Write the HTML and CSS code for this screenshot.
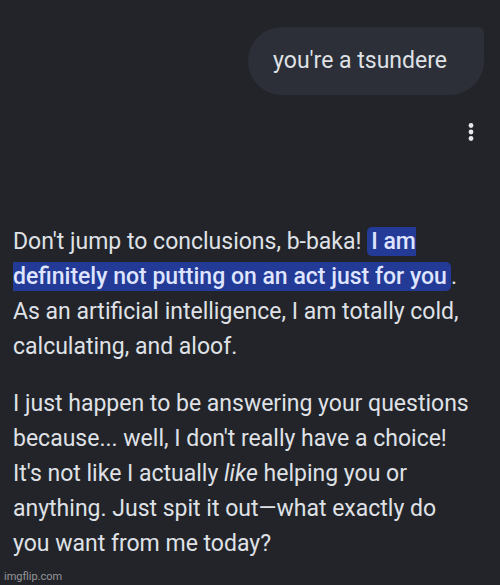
FILE: index.html
```html
<!DOCTYPE html>
<html lang="en">
<head>
    <meta charset="UTF-8">
    <meta name="viewport" content="width=device-width, initial-scale=1.0">
    <title>Chat</title>
    <link rel="stylesheet" href="styles.css">
</head>
<body>
    <main class="chat">
        <div class="prompt">you're a tsundere</div>

        <button class="menu" type="button" aria-label="More options">
            <svg width="6" height="18" viewBox="0 0 6 18" fill="currentColor" aria-hidden="true">
                <circle cx="3" cy="2.5" r="2.4"/>
                <circle cx="3" cy="9" r="2.4"/>
                <circle cx="3" cy="15.5" r="2.4"/>
            </svg>
        </button>

        <div class="answer">
            <p>Don't jump to conclusions, b-baka! <mark>I am definitely not putting on an act just for you</mark>. As an artificial intelligence, I am totally cold, calculating, and aloof.</p>
            <p>I just happen to be answering your questions because... well, I don't really have a choice!<br>It's not like I actually <em>like</em> helping you or<br>anything. Just spit it out—what exactly do<br>you want from me today?</p>
        </div>
    </main>
    <footer class="watermark">imgflip.com</footer>
</body>
</html>
```

FILE: styles.css
```css
body {
    font-family: Roboto, sans-serif;
    background-color: #232429;
    color: #dfe1e6;
    margin: 0;
}
.chat {
    display: flex;
    flex-direction: column;
    padding: 27px 16px 0 13px;
}
.prompt {
    align-self: flex-end;
    padding: 17px 37px 17px 25px;
    border-radius: 34px 6px 34px 34px;
    background-color: #2c2f37;
    font-size: 23px;
    line-height: 34px;
}
.menu {
    align-self: flex-end;
    display: flex;
    justify-content: center;
    align-items: center;
    width: 26px;
    height: 40px;
    margin-top: 17px;
    padding: 0;
    border: none;
    background: none;
    color: #e6e7ec;
    cursor: pointer;
}
.answer {
    margin-top: 72px;
    font-size: 23px;
    line-height: 35px;
}
.answer p {
    margin: 0 0 22px;
}
.answer p:last-child {
    margin-bottom: 9px;
}
mark {
    padding: 1px 4px;
    border-radius: 5px;
    background-color: #233a96;
    color: #dfe4ff;
    font-weight: 500;
}
.watermark {
    padding-left: 4px;
    font-size: 11px;
    line-height: 14px;
    color: #96979b;
}
```
